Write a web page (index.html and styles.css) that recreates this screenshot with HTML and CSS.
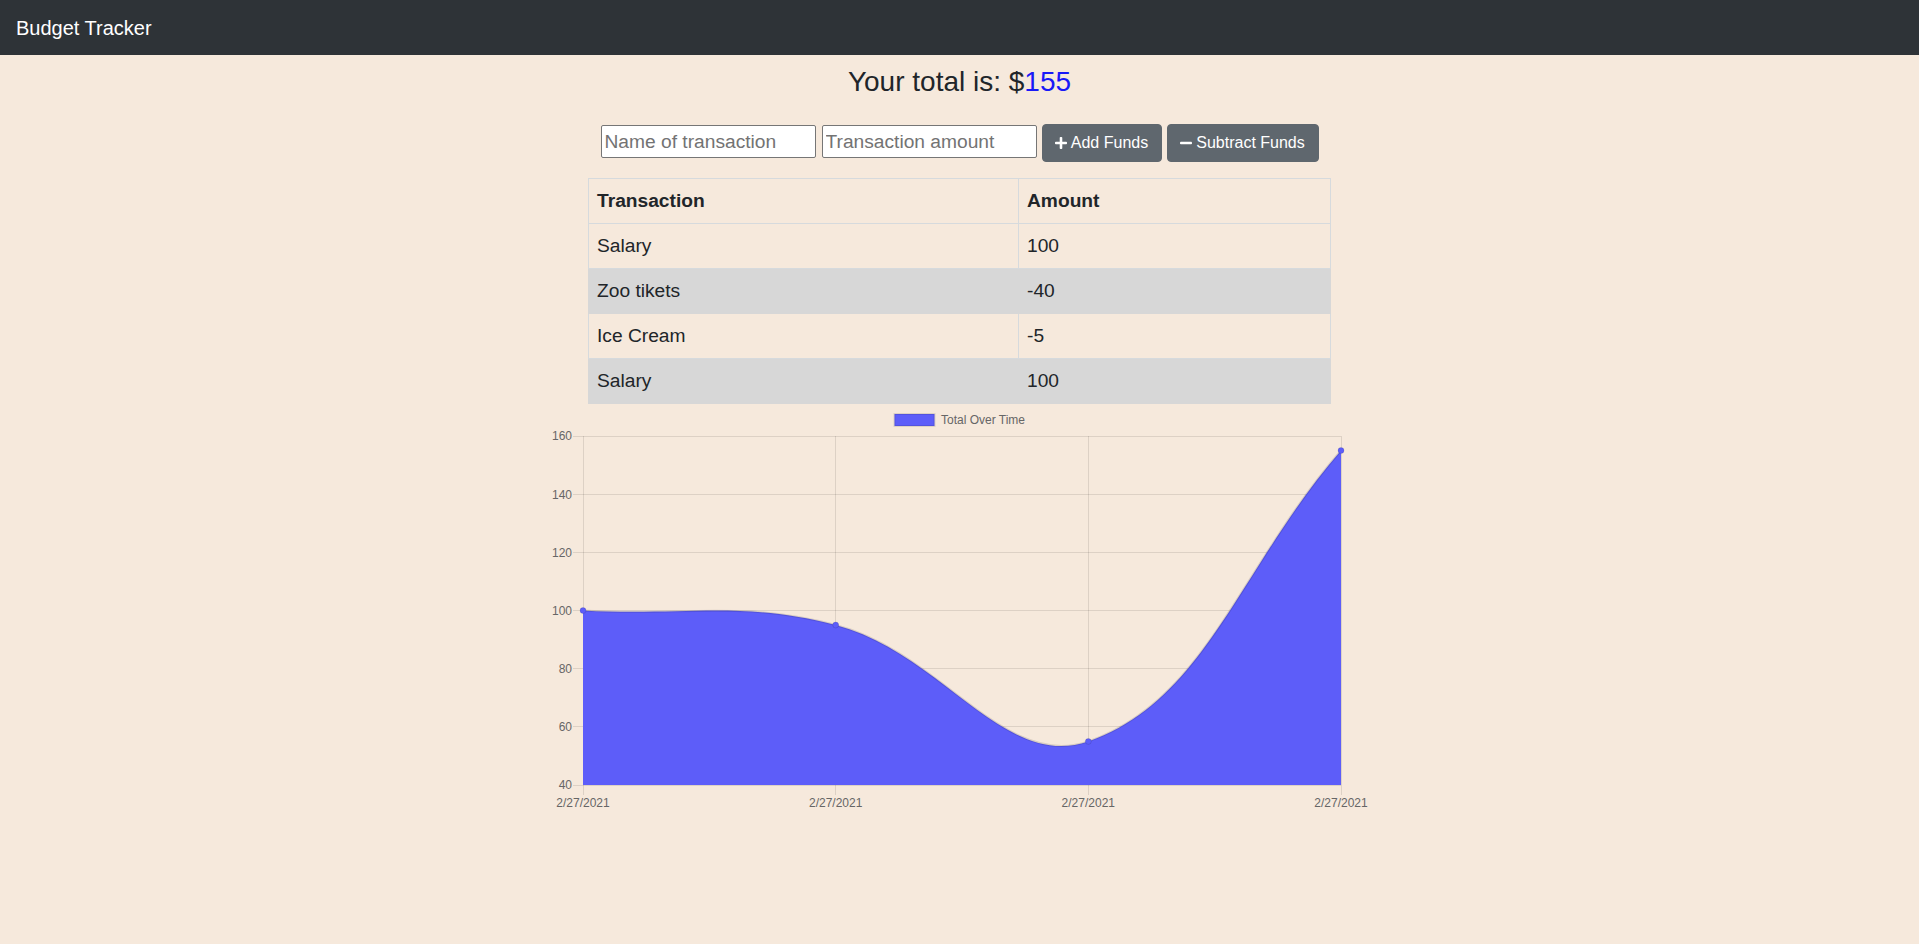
FILE: index.html
```html
<!DOCTYPE html>
<html lang="en">
<head>
<meta charset="utf-8">
<title>Budget Tracker</title>
<link rel="stylesheet" href="styles.css">
</head>
<body>
<nav class="navbar"><span class="brand">Budget Tracker</span></nav>
<main class="main">
  <h3 class="total">Your total is: $<span class="total-amount">155</span></h3>
  <div class="form">
    <input class="field field-name" type="text" placeholder="Name of transaction">
    <input class="field" type="number" placeholder="Transaction amount">
    <button class="btn btn-add"><svg class="icon" viewBox="0 32 448 448"><path d="M416 208H272V64c0-17.67-14.33-32-32-32h-32c-17.67 0-32 14.33-32 32v144H32c-17.67 0-32 14.33-32 32v32c0 17.67 14.33 32 32 32h144v144c0 17.67 14.33 32 32 32h32c17.67 0 32-14.33 32-32V304h144c17.67 0 32-14.33 32-32v-32c0-17.67-14.33-32-32-32z"/></svg>Add Funds</button>
    <button class="btn btn-sub"><svg class="icon" viewBox="0 32 448 448"><path d="M416 208H32c-17.67 0-32 14.33-32 32v32c0 17.67 14.33 32 32 32h384c17.67 0 32-14.33 32-32v-32c0-17.67-14.33-32-32-32z"/></svg>Subtract Funds</button>
  </div>
  <table class="table">
    <colgroup><col class="col-name"><col class="col-amount"></colgroup>
    <thead><tr><th>Transaction</th><th>Amount</th></tr></thead>
    <tbody>
      <tr><td>Salary</td><td>100</td></tr>
      <tr class="striped"><td>Zoo tikets</td><td>-40</td></tr>
      <tr><td>Ice Cream</td><td>-5</td></tr>
      <tr class="striped"><td>Salary</td><td>100</td></tr>
    </tbody>
  </table>
  <svg class="chart" width="840" height="416" viewBox="540 404 840 416">
    <g class="legend">
      <rect x="894.5" y="414" width="40" height="12" class="legend-box"/>
      <text x="941" y="424.3" class="label">Total Over Time</text>
    </g>
    <g class="grid">
      <line x1="573" y1="436.5" x2="1341" y2="436.5"/>
      <line x1="573" y1="494.5" x2="1341" y2="494.5"/>
      <line x1="573" y1="552.5" x2="1341" y2="552.5"/>
      <line x1="573" y1="610.5" x2="1341" y2="610.5"/>
      <line x1="573" y1="668.5" x2="1341" y2="668.5"/>
      <line x1="573" y1="726.5" x2="1341" y2="726.5"/>
      <line x1="573" y1="785.5" x2="1341" y2="785.5"/>
      <line x1="583.5" y1="436" x2="583.5" y2="795"/>
      <line x1="835.5" y1="436" x2="835.5" y2="795"/>
      <line x1="1088.5" y1="436" x2="1088.5" y2="795"/>
      <line x1="1341.5" y1="436" x2="1341.5" y2="795"/>
    </g>
    <path class="area" d="M583,785 L583,610.5 C684.1,616.3 739.4,600.05 835.7,625 C941.5,652.4 1003.6,770.7 1088.3,741.4 C1205.7,700.9 1239.9,566.9 1341,450.5 L1341,785 Z"/>
    <path class="line" d="M583,610.5 C684.1,616.3 739.4,600.05 835.7,625 C941.5,652.4 1003.6,770.7 1088.3,741.4 C1205.7,700.9 1239.9,566.9 1341,450.5"/>
    <g class="points">
      <circle cx="583" cy="610.5" r="3"/>
      <circle cx="835.7" cy="625" r="3"/>
      <circle cx="1088.3" cy="741.4" r="3"/>
      <circle cx="1341" cy="450.5" r="3"/>
    </g>
    <g class="label y-labels">
      <text x="572" y="440.3">160</text>
      <text x="572" y="498.5">140</text>
      <text x="572" y="556.6">120</text>
      <text x="572" y="614.8">100</text>
      <text x="572" y="673">80</text>
      <text x="572" y="731.1">60</text>
      <text x="572" y="789.3">40</text>
    </g>
    <g class="label x-labels">
      <text x="583" y="806.5">2/27/2021</text>
      <text x="835.7" y="806.5">2/27/2021</text>
      <text x="1088.3" y="806.5">2/27/2021</text>
      <text x="1341" y="806.5">2/27/2021</text>
    </g>
  </svg>
</main>
</body>
</html>
```
FILE: styles.css
```css
html {
  background: #f6e9dc;
}
body {
  margin: 0;
  background: #f6e9dc;
  font-family: "Liberation Sans", Arial, sans-serif;
  color: #212529;
  min-height: 944px;
}
.navbar {
  height: 55px;
  background: #2e3337;
  display: flex;
  align-items: center;
  padding: 0 16px;
}
.brand {
  color: #ffffff;
  font-size: 20px;
  line-height: 30px;
  margin-top: 1px;
}
.main {
  display: flex;
  flex-direction: column;
  align-items: center;
}
.total {
  margin: 10px 0 0;
  font-size: 28px;
  line-height: 34px;
  font-weight: normal;
  color: #212529;
}
.total-amount {
  color: #1919f7;
}
.form {
  display: flex;
  align-items: flex-start;
  gap: 5px;
  margin-top: 25px;
}
.field {
  box-sizing: border-box;
  width: 215px;
  height: 33px;
  margin-top: 1px;
  padding: 1px 3px;
  border: 1px solid #767676;
  border-radius: 2px;
  background: #ffffff;
  font-family: "Liberation Sans", Arial, sans-serif;
  font-size: 19.2px;
  color: #212529;
}
.field::placeholder {
  color: #737373;
}
.field-name {
  margin-right: 1px;
}
.btn {
  box-sizing: border-box;
  height: 38px;
  display: flex;
  align-items: center;
  justify-content: center;
  padding: 0 11px;
  border: 1px solid #5f676e;
  border-radius: 4px;
  background: #5f676e;
  color: #ffffff;
  font-family: "Liberation Sans", Arial, sans-serif;
  font-size: 16px;
  line-height: 24px;
}
.btn-add {
  width: 120px;
}
.btn-sub {
  width: 152px;
}
.icon {
  width: 12px;
  height: 12px;
  fill: #ffffff;
  margin-right: 4px;
}
.table {
  margin-top: 16px;
  width: 742px;
  table-layout: fixed;
  border-collapse: collapse;
  font-size: 19.2px;
  line-height: 28px;
  color: #212529;
}
.col-name {
  width: 430px;
}
.col-amount {
  width: 312px;
}
.table th,
.table td {
  border: 1px solid #d6dadd;
  padding: 8px;
  text-align: left;
  vertical-align: top;
}
.table th {
  font-weight: bold;
}
.striped td {
  background: #d7d7d7;
  border-color: #d7d7d7;
}
.chart {
  display: block;
}
.grid line {
  stroke: rgba(0, 0, 0, 0.1);
  stroke-width: 1;
}
.area {
  fill: #5d5df9;
}
.line {
  fill: none;
  stroke: rgba(0, 0, 0, 0.12);
  stroke-width: 2;
}
.points circle {
  fill: #5d5df9;
  stroke: rgba(0, 0, 0, 0.1);
  stroke-width: 1;
}
.legend-box {
  fill: #5d5df9;
  stroke: rgba(0, 0, 0, 0.1);
  stroke-width: 2;
}
.label {
  font-family: "Liberation Sans", Arial, sans-serif;
  font-size: 12px;
  fill: #666666;
}
.y-labels text {
  text-anchor: end;
}
.x-labels text {
  text-anchor: middle;
}
```
